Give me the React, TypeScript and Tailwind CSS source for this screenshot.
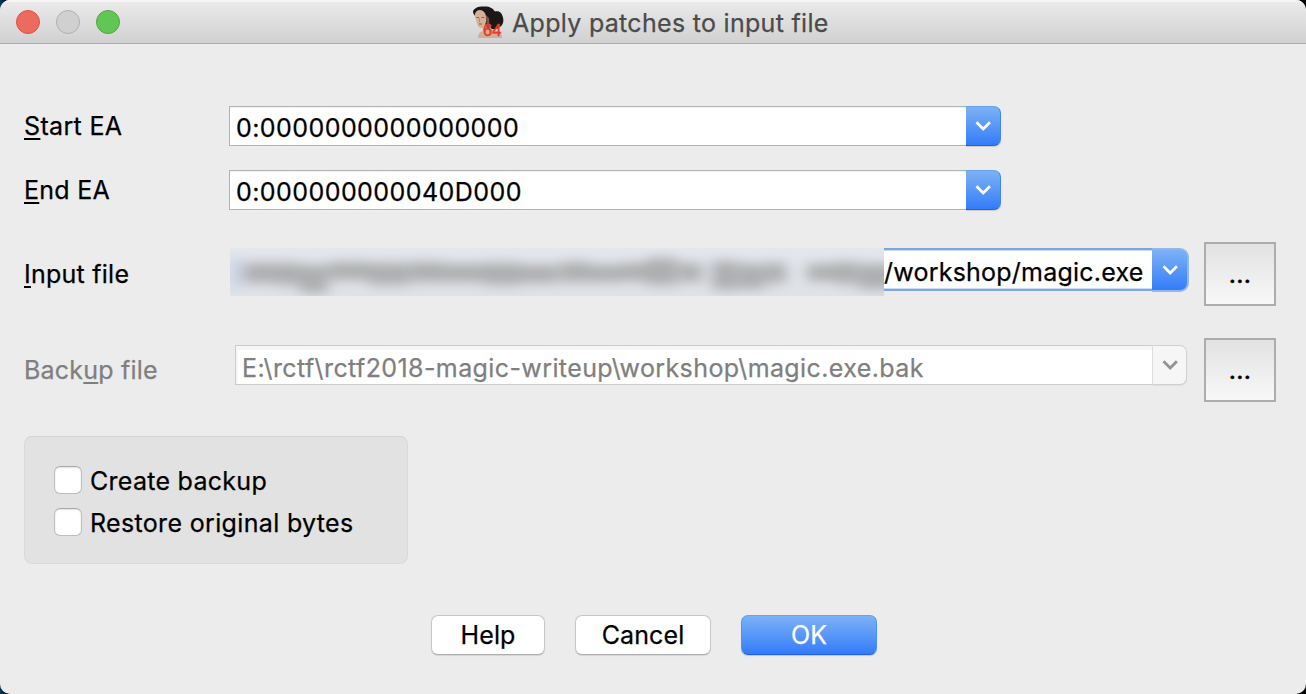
import type { ReactNode } from 'react';

function Chevron({ className }: { className: string }) {
  return (
    <svg width="16" height="10" viewBox="0 0 16 10" className={`shrink-0 ${className}`} fill="none">
      <path d="M1.5 1.3 8.2 8l6.7-6.7" stroke="currentColor" strokeWidth="2.8" />
    </svg>
  );
}

function Portrait() {
  return (
    <svg width="32" height="34" viewBox="0 0 32 34" className="shrink-0">
      <defs>
        <filter id="soft" x="-10%" y="-10%" width="120%" height="120%">
          <feGaussianBlur stdDeviation="0.6" />
        </filter>
      </defs>
      <g filter="url(#soft)">
        <path d="M1 6C3 2 8 1 13 1.500c5 0 8 2 10 5 5-1 7 2 8 6 1 4 0 8-4 10-2 2-6 2-8 1l-4 2-6-10C5 12 1 11 1 6Z" fill="#1d1414" />
        <path d="M10 20l8-1 1 5c4 1 8 2 10 5 1 1 1 2 1 4H6c0-4 2-6 5-7Z" fill="#d2ae98" />
        <path d="M3 9c1-4 5-5 8-3 3 2 4 7 3 11-1 4-3 6-5 6-3 0-4-4-5-8C3 13 2.500 11 3 9Z" fill="#d6b09a" />
        <path d="M12 8c3 3 3 9 2 14l4 4-1-13Z" fill="#7c5446" />
        <path d="M4.500 12.500h2.500M9.500 12.500h3" stroke="#80604f" strokeWidth="1" />
        <path d="M7.500 13v4" stroke="#b58771" strokeWidth="1" />
        <path d="M7 19h3" stroke="#9b4c42" strokeWidth="1" />
      </g>
      <text x="11" y="30.500" fontFamily="Liberation Sans, sans-serif" fontSize="16.500" fill="#e63c28" stroke="#e63c28" strokeWidth="0.5">
        64
      </text>
    </svg>
  );
}

function Label({ children, className }: { children: ReactNode; className: string }) {
  return <span className={className}>{children}</span>;
}

function Key({ children }: { children: ReactNode }) {
  return <span className="underline decoration-2 underline-offset-[3px] [text-decoration-skip-ink:none]">{children}</span>;
}

function AddressField({ value }: { value: string }) {
  return (
    <div className="flex h-10 w-[772px]">
      <div className="flex flex-1 items-center border border-r-0 border-[#b3b3b3] bg-white pt-[3px] pl-[6px] shadow-[inset_0_1px_0_#f0f0f0]">
        <span className="tracking-[0.44px]">{value}</span>
      </div>
      <button className="flex w-[35px] items-center justify-center rounded-r-[7px] border border-l-0 border-t-[#64a3ee] border-r-[#4385f6] border-b-[#1f5df5] bg-linear-to-b from-[#7cb1f4] to-[#337bf9] shadow-[0_1px_1px_rgba(0,0,0,0.15)]">
        <Chevron className="text-white" />
      </button>
    </div>
  );
}

function Browse() {
  return (
    <button className="ml-auto flex h-16 w-[72px] items-center justify-center border-2 border-[#adadad] bg-linear-to-b from-[#e2e2e2] to-[#f8f8f8]">
      <span className="tracking-[0.3px] [-webkit-text-stroke:0.5px]">...</span>
    </button>
  );
}

function Redacted() {
  const words = [
    [14, 15, 34, 20], [46, 15, 24, 22], [70, 17, 28, 28], [99, 14, 40, 18],
    [139, 15, 40, 22], [180, 14, 32, 20], [211, 16, 44, 18], [254, 15, 36, 22],
    [290, 17, 38, 18], [330, 14, 30, 20], [360, 17, 32, 17], [392, 15, 24, 18],
    [416, 10, 32, 27], [450, 15, 22, 19], [482, 13, 26, 29], [509, 16, 26, 25],
    [536, 15, 20, 20], [577, 16, 28, 17], [605, 14, 22, 22], [628, 16, 40, 25],
  ];
  return (
    <svg width="654" height="48" viewBox="0 0 654 48" className="shrink-0">
      <defs>
        <linearGradient id="smear" x1="0" y1="0" x2="0" y2="1">
          <stop offset="0" stopColor="#e4e8ee" />
          <stop offset="0.5" stopColor="#e1e4e8" />
          <stop offset="1" stopColor="#dfe3e9" />
        </linearGradient>
        <filter id="haze" x="-10%" y="-70%" width="120%" height="240%">
          <feGaussianBlur stdDeviation="7 6" />
        </filter>
      </defs>
      <rect width="654" height="48" fill="url(#smear)" />
      <g filter="url(#haze)">
        <rect x="0" y="10" width="12" height="30" fill="#c9d1e3" />
        {words.map(([x, y, w, h]) => (
          <rect key={x} x={x} y={y} width={w} height={h} fill="#adaeb0" />
        ))}
      </g>
    </svg>
  );
}

function Check({ children }: { children: ReactNode }) {
  return (
    <label className="flex h-7 items-center gap-2">
      <span className="size-7 rounded-[6px] border border-[#bdbdbd] border-t-[#a8a8a8] bg-white shadow-[inset_0_1px_2px_rgba(0,0,0,0.12)]" />
      {children}
    </label>
  );
}

export default function App() {
  return (
    <div className="h-[694px] w-[1306px] bg-linear-to-r from-[#063c5c] from-0% to-black to-1%">
      <div className="flex h-full flex-col overflow-hidden rounded-[10px] bg-[#ececec] font-['Inter',sans-serif] text-[25px] leading-[30px] font-normal whitespace-nowrap text-black [-webkit-text-stroke:0.25px]">
        <header className="flex h-11 shrink-0 items-center border-b border-[#acacac] bg-linear-to-b from-[#ebebeb] to-[#d1d1d1] pl-4 shadow-[inset_0_2px_0_#f6f6f6]">
          <div className="flex w-[456px] gap-4">
            <span className="size-6 rounded-full border border-[#d9534a] bg-[#ed6a5f]" />
            <span className="size-6 rounded-full border border-[#b0b0b0] bg-[#d0d0d0]" />
            <span className="size-6 rounded-full border border-[#51a73d] bg-[#62c655]" />
          </div>
          <Portrait />
          <span className="ml-2 pt-[3px] tracking-[0.3px] text-[#4b4b4b]">Apply patches to input file</span>
        </header>

        <main className="flex flex-col pt-[62px] pr-[30px] pl-6">
          <div className="flex h-10 items-center">
            <div className="w-[205px]"><Label className="tracking-[0.35px]"><Key>S</Key>tart EA</Label></div>
            <AddressField value="0:0000000000000000" />
          </div>
          <div className="mt-6 flex h-10 items-center">
            <div className="w-[205px]"><Label className="tracking-[0.25px]"><Key>E</Key>nd EA</Label></div>
            <AddressField value="0:000000000040D000" />
          </div>

          <div className="mt-8 flex h-16 items-center">
            <div className="w-[206px]"><Label className="tracking-[0.25px]"><Key>I</Key>nput file</Label></div>
            <div className="-mt-1 flex h-12 items-start">
              <Redacted />
              <div className="flex h-[43px] w-[268px] items-center border-y-2 border-[#7ba6de] bg-white pt-[4px] shadow-[inset_0_1px_0_#c9dcf5,inset_0_-1px_0_#c9dcf5]">
                <span className="tracking-[0.22px]">/workshop/magic.exe</span>
              </div>
              <button className="flex h-11 w-[37px] items-center justify-center rounded-r-[9px] border-2 border-l-0 border-[#92b8ea] bg-linear-to-b from-[#7cb1f4] to-[#337bf9]">
                <Chevron className="text-white" />
              </button>
            </div>
            <Browse />
          </div>

          <div className="mt-8 flex h-16 items-center">
            <div className="w-[211px]"><Label className="tracking-[0.22px] text-[#7f7f7f]">Back<Key>u</Key>p file</Label></div>
            <div className="-mt-[10px] flex h-10 w-[952px]">
              <div className="flex flex-1 items-center border border-r-0 border-[#cbcbcb] bg-white pt-[5px] pl-[6px] text-[#7f7f7f] shadow-[inset_2px_4px_0_#f6f6f6]">
                <span className="tracking-[0.4px]">E:\rctf\rctf2018-magic-writeup\workshop\magic.exe.bak</span>
              </div>
              <button className="flex w-[35px] items-center justify-center rounded-r-[7px] border border-[#d0d0d0] border-l-[#dddddd] bg-[#f6f6f6] shadow-[0_1px_1px_rgba(0,0,0,0.06)]">
                <Chevron className="text-[#939393]" />
              </button>
            </div>
            <Browse />
          </div>

          <section className="mt-[34px] flex h-32 w-96 flex-col gap-[14px] rounded-[8px] border border-[#dadada] border-t-[#d2d2d2] bg-[#e2e2e2] pt-[29px] pl-[29px]">
            <Check><span className="pt-[2px] tracking-[0.28px]">Create backup</span></Check>
            <Check><span className="pt-[2px] tracking-[0.34px]">Restore original bytes</span></Check>
          </section>

          <footer className="mt-[51px] ml-[407px] flex h-10 gap-[30px]">
            <button className="w-[114px] rounded-[7px] border border-[#c6c6c6] border-b-[#adadad] bg-white shadow-[0_1px_1px_rgba(0,0,0,0.1)]"><span className="tracking-[0.1px]">Help</span></button>
            <button className="w-[136px] rounded-[7px] border border-[#c6c6c6] border-b-[#adadad] bg-white shadow-[0_1px_1px_rgba(0,0,0,0.1)]"><span className="tracking-[0.1px]">Cancel</span></button>
            <button className="w-[136px] rounded-[7px] border border-[#4e93f3] border-t-[#64a3ee] border-b-[#1f5df5] bg-linear-to-b from-[#7cb1f4] to-[#337bf9] text-white shadow-[0_1px_1px_rgba(0,0,0,0.15)]"><span>OK</span></button>
          </footer>
        </main>
      </div>
    </div>
  );
}
